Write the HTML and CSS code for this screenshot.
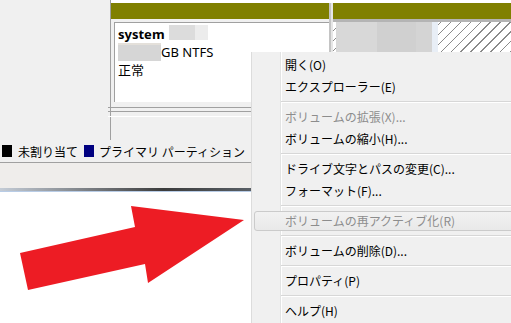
FILE: index.html
```html
<!DOCTYPE html>
<html lang="ja">
<head>
    <meta charset="UTF-8">
    <title>ディスクの管理</title>
    <link rel="stylesheet" href="styles.css">
</head>
<body>
    <div class="screen">
        <!-- Disk row -->
        <div class="disk-row">
            <div class="disk-info"></div>
            <div class="disk-map">
                <div class="parts">
                    <div class="part part-system">
                        <div class="part-head"></div>
                        <div class="part-body">
                            <div class="vol-name">system <span class="blur blur-name"></span></div>
                            <div><span class="blur blur-size"></span>GB NTFS</div>
                            <div>正常</div>
                        </div>
                    </div>
                    <div class="part-gap"></div>
                    <div class="part part-free">
                        <div class="part-head"></div>
                        <div class="part-body hatch"><span class="blur blur-free"></span></div>
                    </div>
                </div>
                <div class="rule rule-a"></div>
                <div class="rule rule-b"></div>
                <div class="rule rule-c"></div>
            </div>
        </div>

        <!-- Legend -->
        <div class="legend">
            <span class="swatch swatch-free"></span>
            <span class="legend-text">未割り当て</span>
            <span class="swatch swatch-primary"></span>
            <span class="legend-text">プライマリ パーティション</span>
        </div>

        <div class="status"></div>
        <div class="edge"></div>
        <div class="canvas"></div>
    </div>

    <!-- Annotation arrow -->
    <svg class="arrow" width="511" height="323" viewBox="0 0 511 323">
        <polygon points="20,253 135,227 131,206 244,220 148,283 145,264 28,290" fill="#ed1c24"/>
    </svg>

    <!-- Context menu -->
    <ul class="menu">
        <li class="item">開く(O)</li>
        <li class="item">エクスプローラー(E)</li>
        <li class="sep"></li>
        <li class="item disabled">ボリュームの拡張(X)...</li>
        <li class="item">ボリュームの縮小(H)...</li>
        <li class="sep"></li>
        <li class="item">ドライブ文字とパスの変更(C)...</li>
        <li class="item">フォーマット(F)...</li>
        <li class="sep"></li>
        <li class="item disabled hover">ボリュームの再アクティブ化(R)</li>
        <li class="sep"></li>
        <li class="item">ボリュームの削除(D)...</li>
        <li class="sep"></li>
        <li class="item">プロパティ(P)</li>
        <li class="sep"></li>
        <li class="item">ヘルプ(H)</li>
    </ul>
</body>
</html>
```

FILE: styles.css
```css
html, body {
    margin: 0;
    padding: 0;
}

body {
    width: 511px;
    height: 323px;
    overflow: hidden;
    position: relative;
    background-color: #f0f0f0;
    font-family: "Noto Sans", "Noto Sans CJK JP", sans-serif;
    color: #000;
}

.screen {
    display: flex;
    flex-direction: column;
    height: 323px;
}

/* Disk row */
.disk-row {
    display: flex;
    height: 140px;
}

.disk-info {
    width: 110px;
    border-right: 1px solid #a0a0a0;
}

.disk-map {
    flex: 1;
}

.parts {
    display: flex;
    height: 99px;
    padding-top: 3px;
    background-color: #fff;
}

.part {
    display: flex;
    flex-direction: column;
    background-color: #f0f0f0;
}

.part-system {
    width: 218px;
}

.part-free {
    flex: 1;
}

.part-gap {
    width: 4px;
    background: linear-gradient(to right, #c4c4c4 0 2px, #e6e6e6 2px);
}

.part-head {
    height: 16px;
    background-color: #808000;
}

.part-system .part-body {
    flex: 1;
    margin: 3px 0 0 3px;
    padding: 2px 0 0 3px;
    background-color: #fff;
    border-top: 1px solid #a0a0a0;
    border-left: 1px solid #a0a0a0;
    font-size: 13px;
    line-height: 18px;
    white-space: nowrap;
}

.vol-name {
    font-weight: bold;
}

.blur {
    display: inline-block;
    vertical-align: top;
}

.blur-name {
    width: 39px;
    height: 15px;
    margin-left: 1px;
    background: linear-gradient(to right, #dcdcdc 0 26px, #ececec 26px);
}

.blur-size {
    width: 43px;
    height: 18px;
    margin-top: 0;
    background: linear-gradient(#e4e0da 0 2px, #d6d6d6 2px);
}

.hatch {
    flex: 1;
    padding: 0 0 0 3px;
    border-top: 3px solid #b4b4b4;
    background: repeating-linear-gradient(135deg, #fff 0 6px, #8a8a8a 6px 7px);
}

.blur-free {
    width: 102px;
    height: 30px;
    background: linear-gradient(to right, #d8d8d8 0 40%, #d0d0d0 40% 78%, #d4d4d4 78% 94%, #e8eef6 94%);
}

.rule {
    margin-left: -3px;
}

.rule-a {
    margin-top: 5px;
    border-top: 1px solid #a0a0a0;
}

.rule-b {
    margin-top: 3px;
    border-top: 1px solid #a0a0a0;
}

.rule-c {
    margin-top: 4px;
    border-top: 1px solid #fff;
}

/* Legend */
.legend {
    display: flex;
    align-items: center;
    height: 22px;
    padding-left: 2px;
    border-bottom: 1px solid #a0a0a0;
    font-family: "Noto Sans CJK JP", sans-serif;
    font-size: 12px;
    white-space: nowrap;
}

.swatch {
    width: 10px;
    height: 12px;
}

.swatch-free {
    background-color: #000;
    margin-right: 6px;
}

.swatch-primary {
    background-color: #000080;
    margin: 0 5px 0 6px;
}

.status {
    height: 25px;
    background-color: #efedeb;
}

.edge {
    height: 4px;
    background: linear-gradient(to right, #c4ccd6, #3c3c3c 32%, #6c7680 60%, #a4bcdc 95%);
    border-bottom: 1px solid #b8cce6;
    box-sizing: border-box;
}

.canvas {
    flex: 1;
    background-color: #fff;
}

/* Arrow annotation */
.arrow {
    position: absolute;
    left: 0;
    top: 0;
    pointer-events: none;
}

/* Context menu */
.menu {
    position: absolute;
    left: 251px;
    top: 52px;
    width: 265px;
    bottom: 0;
    margin: 0;
    padding: 2px 0 0;
    list-style: none;
    border-left: 1px solid #dcdcdc;
    background-color: #f0f0f0;
    background-image: linear-gradient(to right, transparent 28px, #e2e3e3 28px 29px, #fff 29px 30px, transparent 30px);
    font-family: "Noto Sans CJK JP", sans-serif;
    font-size: 12px;
    white-space: nowrap;
}

.item {
    height: 22px;
    line-height: 22px;
    padding-left: 33px;
}

.disabled {
    color: #8d8d8d;
}

.hover {
    height: 18px;
    line-height: 18px;
    margin: 1px 0 1px 2px;
    padding-left: 30px;
    border: 1px solid #cbcbcb;
    border-radius: 3px;
    background: linear-gradient(#f2f2f2, #e9e9e9);
}

.sep {
    height: 8px;
    margin-left: 29px;
    background:
        linear-gradient(#d7d7d7, #d7d7d7) 0 3px / 100% 1px no-repeat,
        linear-gradient(#fff, #fff) 0 4px / 100% 1px no-repeat;
}
```
